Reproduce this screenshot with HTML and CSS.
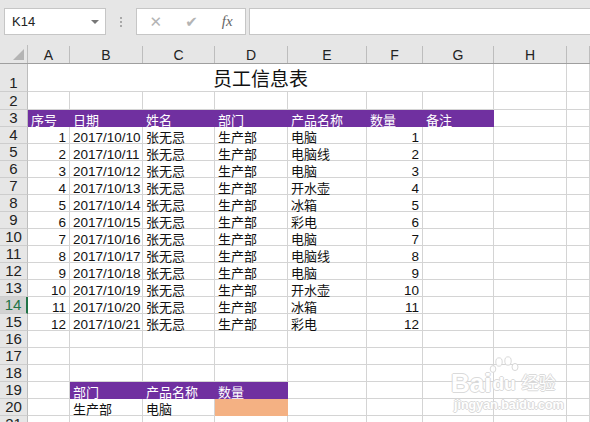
FILE: index.html
```html
<!DOCTYPE html>
<html lang="zh-CN">
<head>
  <meta charset="UTF-8">
  <title>员工信息表</title>
  <link rel="stylesheet" href="styles.css">
</head>
<body>
  <div class="app">
    <!-- formula bar -->
    <div class="formula-bar">
      <div class="namebox">
        <span>K14</span>
        <span class="caret"></span>
      </div>
      <div class="grip"><i></i><i></i><i></i></div>
      <div class="fx-buttons">
        <span class="fx-btn">&#x2715;</span>
        <span class="fx-btn">&#x2714;</span>
        <span class="fx-btn fx">fx</span>
      </div>
      <div class="fx-input"></div>
    </div>

    <!-- sheet -->
    <div id="sheet" class="sheet">
      <div class="row colhead">
        <div class="corner"><span class="corner-tri"></span></div>
        <div class="colname">A</div>
        <div class="colname">B</div>
        <div class="colname">C</div>
        <div class="colname">D</div>
        <div class="colname">E</div>
        <div class="colname">F</div>
        <div class="colname">G</div>
        <div class="colname">H</div>
        <div class="colname"></div>
      </div>
    </div>

    <div class="watermark">
      <div class="wm-top">
        <span class="wm-bai">Bai</span>
        <span class="wm-paw">
          <svg width="30" height="36" viewBox="0 0 30 36">
            <ellipse cx="10" cy="6" rx="3.2" ry="4.2" />
            <ellipse cx="19" cy="5" rx="3.2" ry="4.2" />
            <ellipse cx="26" cy="11" rx="3" ry="3.6" />
            <ellipse cx="4" cy="13" rx="2.8" ry="3.4" />
          </svg>
          <span class="wm-du">du</span>
        </span>
        <span class="wm-jy">经验</span>
      </div>
      <div class="wm-url">jingyan.baidu.com</div>
    </div>
  </div>

  <script>
    var data = [
      [1, '2017/10/10', '张无忌', '生产部', '电脑', 1],
      [2, '2017/10/11', '张无忌', '生产部', '电脑线', 2],
      [3, '2017/10/12', '张无忌', '生产部', '电脑', 3],
      [4, '2017/10/13', '张无忌', '生产部', '开水壶', 4],
      [5, '2017/10/14', '张无忌', '生产部', '冰箱', 5],
      [6, '2017/10/15', '张无忌', '生产部', '彩电', 6],
      [7, '2017/10/16', '张无忌', '生产部', '电脑', 7],
      [8, '2017/10/17', '张无忌', '生产部', '电脑线', 8],
      [9, '2017/10/18', '张无忌', '生产部', '电脑', 9],
      [10, '2017/10/19', '张无忌', '生产部', '开水壶', 10],
      [11, '2017/10/20', '张无忌', '生产部', '冰箱', 11],
      [12, '2017/10/21', '张无忌', '生产部', '彩电', 12]
    ];
    var numCols = [0, 1, 5];
    var sheet = document.getElementById('sheet');

    function cell(text, cls) {
      var c = document.createElement('div');
      c.className = 'cell' + (cls ? ' ' + cls : '');
      c.textContent = text == null ? '' : text;
      return c;
    }

    function addRow(n, cells, rowCls) {
      var row = document.createElement('div');
      row.className = 'row' + (rowCls ? ' ' + rowCls : '');
      var head = document.createElement('div');
      head.className = 'rowhead' + (n === 14 ? ' active' : '');
      head.textContent = n;
      row.appendChild(head);
      cells.forEach(function (c) { row.appendChild(c); });
      sheet.appendChild(row);
    }

    function blank(count) {
      var list = [];
      for (var i = 0; i < count; i++) list.push(cell(''));
      return list;
    }

    // row 1: merged title
    addRow(1, [cell('员工信息表', 'title')].concat(blank(2)), 'r-title');
    addRow(2, blank(9), 'r-2');

    // row 3: header
    var heads = ['序号', '日期', '姓名', '部门', '产品名称', '数量', '备注'];
    addRow(3, heads.map(function (h) { return cell(h, 'head'); }).concat(blank(2)));

    data.forEach(function (r, i) {
      var cells = r.map(function (v, j) {
        return cell(v, numCols.indexOf(j) >= 0 ? 'num' : '');
      });
      addRow(i + 4, cells.concat(blank(3)));
    });

    addRow(16, blank(9));
    addRow(17, blank(9));
    addRow(18, blank(9));
    addRow(19, [cell('')].concat(['部门', '产品名称', '数量'].map(function (h) {
      return cell(h, 'head');
    })).concat(blank(5)));
    addRow(20, [cell(''), cell('生产部'), cell('电脑'), cell('', 'orange')].concat(blank(5)));
    addRow(21, blank(9));
  </script>
</body>
</html>
```

FILE: styles.css
```css
* {
  box-sizing: border-box;
}

body {
  margin: 0;
  width: 590px;
  height: 422px;
  overflow: hidden;
  font-family: "Liberation Sans", "Noto Sans CJK SC", sans-serif;
  background: #fff;
}

.app {
  position: relative;
  width: 590px;
  height: 422px;
  overflow: hidden;
}

/* formula bar */
.formula-bar {
  height: 45px;
  background: #e6e6e6;
  display: flex;
  align-items: flex-start;
  padding: 8px 0 0 4px;
}

.namebox {
  width: 102px;
  height: 27px;
  background: #fff;
  border: 1px solid #c6c6c6;
  display: flex;
  align-items: center;
  justify-content: space-between;
  padding: 0 6px 0 7px;
  font-size: 13px;
  color: #222;
}

.caret {
  width: 0;
  height: 0;
  border-left: 4px solid transparent;
  border-right: 4px solid transparent;
  border-top: 4px solid #777;
}

.grip {
  width: 30px;
  height: 27px;
  display: flex;
  flex-direction: column;
  align-items: center;
  justify-content: center;
  gap: 2px;
}

.grip i {
  width: 2px;
  height: 2px;
  background: #a8a8a8;
}

.fx-buttons {
  width: 110px;
  height: 27px;
  background: #fff;
  border: 1px solid #c6c6c6;
  display: flex;
  align-items: center;
  padding-left: 1px;
}

.fx-btn {
  width: 36px;
  text-align: center;
  font-size: 15px;
  color: #b4b4b4;
  font-family: "DejaVu Sans", sans-serif;
}

.fx-btn.fx {
  font-family: "Liberation Serif", serif;
  font-style: italic;
  font-size: 15px;
  color: #666;
}

.fx-input {
  flex: 1;
  height: 27px;
  margin-left: 3px;
  background: #fff;
  border: 1px solid #c6c6c6;
  border-right: none;
}

/* grid */
.row {
  display: grid;
  grid-template-columns: 28px 42px 73px 72px 73px 79px 56px 71px 73px 23px;
  grid-template-rows: 100%;
  height: 17px;
}

.row.colhead {
  height: 19px;
  background: #e6e6e6;
  border-bottom: 1px solid #9f9f9f;
}

.row.r-title {
  height: 28px;
}

.row.r-2 {
  height: 18px;
}

.corner {
  position: relative;
  border-right: 1px solid #bdbdbd;
}

.corner-tri {
  position: absolute;
  right: 3px;
  bottom: 3px;
  width: 0;
  height: 0;
  border-left: 11px solid transparent;
  border-bottom: 11px solid #b4b4b4;
}

.colname {
  margin-top: 1px;
  border-right: 1px solid #bdbdbd;
  text-align: center;
  font-size: 14px;
  line-height: 18px;
  color: #222;
}

.rowhead {
  background: #e6e6e6;
  border-right: 1px solid #bdbdbd;
  border-bottom: 1px solid #cdcdcd;
  font-size: 15px;
  color: #222;
  display: flex;
  align-items: flex-end;
  justify-content: center;
  line-height: 16px;
}

.rowhead.active {
  background: #d2d2d2;
  color: #217346;
  border-right: 2px solid #217346;
}

.cell {
  min-height: 0;
  border-right: 1px solid #d4d4d4;
  border-bottom: 1px solid #d4d4d4;
  font-size: 13px;
  line-height: 21px;
  padding: 0 3px;
  color: #111;
  white-space: nowrap;
}

.cell.num {
  text-align: right;
  font-size: 13.5px;
}

.cell.title {
  grid-column: span 7;
  text-align: center;
  font-size: 19px;
  line-height: 32px;
}

.cell.head {
  background: #7030a0;
  border-color: #7030a0;
  color: #fff;
}

.cell.orange {
  background: #f4b183;
  border-color: #f4b183;
}

/* watermark */
.watermark {
  position: absolute;
  left: 451px;
  top: 352px;
  width: 110px;
  color: #fff;
  opacity: 0.9;
}

.wm-top {
  display: flex;
  align-items: flex-end;
  height: 44px;
}

.wm-bai,
.wm-du,
.wm-jy,
.wm-url {
  text-shadow: 1px 0 0 #d6d6d6, -1px 0 0 #d6d6d6, 0 1px 0 #d6d6d6, 0 -1px 0 #d6d6d6;
}

.wm-bai {
  font-size: 26px;
  font-weight: bold;
  line-height: 26px;
}

.wm-paw {
  position: relative;
  width: 28px;
  height: 44px;
}

.wm-paw svg {
  position: absolute;
  left: -2px;
  top: 4px;
  fill: #fff;
  stroke: #d6d6d6;
}

.wm-du {
  position: absolute;
  left: 1px;
  bottom: 0;
  font-size: 19px;
  font-weight: bold;
  line-height: 24px;
}

.wm-jy {
  font-size: 17px;
  line-height: 24px;
  margin-left: 2px;
}

.wm-url {
  font-size: 12.5px;
  font-weight: bold;
  margin-top: 2px;
  padding-left: 3px;
}
```
